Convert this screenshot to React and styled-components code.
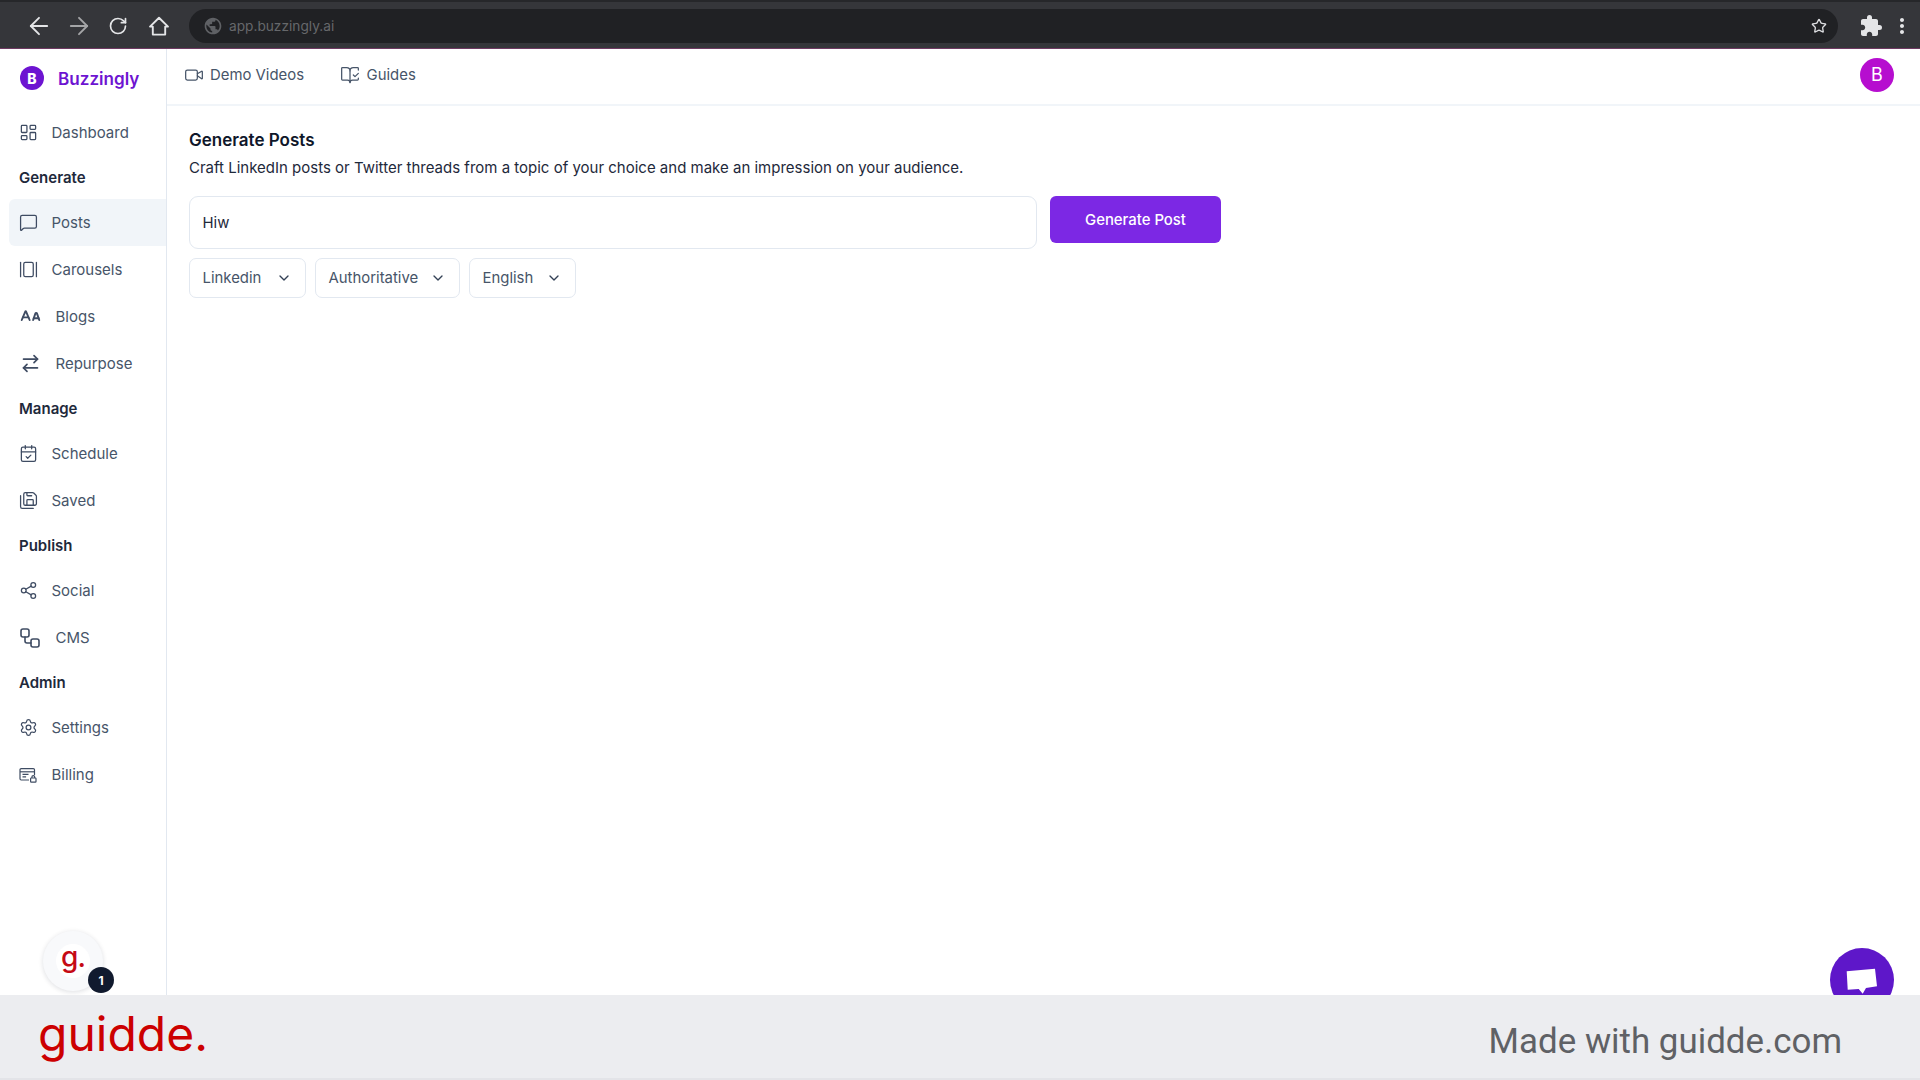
import React from 'react';
import styled, { createGlobalStyle } from 'styled-components';
import {
  ALargeSmall,
  ArrowLeft,
  ArrowRight,
  ArrowRightLeft,
  BookOpenCheck,
  CalendarCheck,
  ChevronDown,
  GalleryHorizontal,
  LayoutDashboard,
  MessageSquare,
  RotateCw,
  SaveAll,
  Settings,
  Share2,
  Star,
  Video,
  Workflow,
} from 'lucide-react';
import { MdExtension, MdMoreVert, MdPublic } from 'react-icons/md';

const BillingIcon = ({ size = 18 }) => (
  <svg width={size} height={size} viewBox="0 0 18 18" fill="none" stroke="currentColor" strokeWidth="1.2">
    <path d="M10 14H2.2A1.2 1.2 0 0 1 1 12.8V3.8a1.2 1.2 0 0 1 1.2-1.2h12.1a1.2 1.2 0 0 1 1.2 1.2V9" />
    <path d="M1 5.8h14.5" />
    <path d="M3.5 8.4h6M3.5 10.8h3.6" />
    <rect x="11.6" y="12" width="5.4" height="4.2" rx=".7" />
    <path d="M12.9 12v-1a1.4 1.4 0 0 1 2.8 0v1" />
  </svg>
);

const HomeIcon = () => (
  <svg width="24" height="24" viewBox="0 0 24 24" fill="none" stroke="currentColor" strokeWidth="1.9" strokeLinejoin="round">
    <path d="M12 3.8 21 12.6h-2.8v8H5.8v-8H3z" />
  </svg>
);

const NAV = [
  { type: 'item', label: 'Dashboard', icon: LayoutDashboard, size: 19 },
  { type: 'head', label: 'Generate' },
  { type: 'item', label: 'Posts', icon: MessageSquare, size: 19, active: true },
  { type: 'item', label: 'Carousels', icon: GalleryHorizontal, size: 19 },
  { type: 'item', label: 'Blogs', icon: ALargeSmall, size: 21, stroke: 2.2, wide: true },
  { type: 'item', label: 'Repurpose', icon: ArrowRightLeft, size: 21, stroke: 1.9, wide: true },
  { type: 'head', label: 'Manage' },
  { type: 'item', label: 'Schedule', icon: CalendarCheck, size: 19 },
  { type: 'item', label: 'Saved', icon: SaveAll, size: 19 },
  { type: 'head', label: 'Publish' },
  { type: 'item', label: 'Social', icon: Share2, size: 19 },
  { type: 'item', label: 'CMS', icon: Workflow, size: 24, wide: true },
  { type: 'head', label: 'Admin' },
  { type: 'item', label: 'Settings', icon: Settings, size: 19 },
  { type: 'item', label: 'Billing', icon: BillingIcon, size: 18 },
];

const App = () => (
  <Page>
    <GlobalStyle />
    <BrowserBar>
      <ChromeButton><ArrowLeft size={28} strokeWidth={1.6} /></ChromeButton>
      <ChromeButton $dim><ArrowRight size={28} strokeWidth={1.6} /></ChromeButton>
      <ChromeButton><ReloadIcon size={20} strokeWidth={2} /></ChromeButton>
      <ChromeButton><HomeIcon /></ChromeButton>
      <AddressBar>
        <MdPublic size={20} color="#5f6165" />
        <AddressText>app.buzzingly.ai</AddressText>
        <StarWrap><Star size={16} strokeWidth={2} /></StarWrap>
      </AddressBar>
      <ChromeRight>
        <ChromeButton><MdExtension size={24} /></ChromeButton>
        <ChromeButton><MdMoreVert size={24} /></ChromeButton>
      </ChromeRight>
    </BrowserBar>

    <AppBody>
      <Sidebar>
        <Brand>
          <BrandMark>B</BrandMark>
          <BrandName>Buzzingly</BrandName>
        </Brand>
        <nav>
          {NAV.map(entry =>
            entry.type === 'head' ? (
              <NavHeading key={entry.label}>{entry.label}</NavHeading>
            ) : (
              <NavItem key={entry.label} $active={entry.active}>
                <NavIcon $wide={entry.wide}>
                  <entry.icon size={entry.size} strokeWidth={entry.stroke || 1.6} />
                </NavIcon>
                {entry.label}
              </NavItem>
            ),
          )}
        </nav>
      </Sidebar>

      <Main>
        <TopBar>
          <TopLink>
            <Video size={20} strokeWidth={1.5} />
            Demo Videos
          </TopLink>
          <TopLink>
            <BookOpenCheck size={20} strokeWidth={1.5} />
            Guides
          </TopLink>
          <Avatar>B</Avatar>
        </TopBar>
        <Content>
          <Title>Generate Posts</Title>
          <Subtitle>
            Craft LinkedIn posts or Twitter threads from a topic of your choice and make an impression on your audience.
          </Subtitle>
          <InputRow>
            <TopicInput>Hiw</TopicInput>
            <GenerateButton>Generate Post</GenerateButton>
          </InputRow>
          <SelectRow>
            <Select $width={117}>Linkedin<ChevronDown size={16} strokeWidth={2} /></Select>
            <Select $width={145}>Authoritative<ChevronDown size={16} strokeWidth={2} /></Select>
            <Select $width={107}>English<ChevronDown size={16} strokeWidth={2} /></Select>
          </SelectRow>
        </Content>
      </Main>

      <GuiddeBubble>
        <GuiddeMark>g.</GuiddeMark>
        <GuiddeBadge>1</GuiddeBadge>
      </GuiddeBubble>

      <ChatBubble>
        <svg width="64" height="64" viewBox="0 0 64 64">
          <polygon fill="#fff" points="16.7,23.3 45,20.7 47,38.3 36,40 32.7,45.7 28.7,41 17.7,41.7" />
        </svg>
      </ChatBubble>
    </AppBody>

    <Footer>
      <GuiddeLogo>guidde.</GuiddeLogo>
      <MadeWith>Made with guidde.com</MadeWith>
    </Footer>
  </Page>
);

export default App;

const GlobalStyle = createGlobalStyle`
  html, body {
    margin: 0;
    padding: 0;
    background: #fff;
  }
  body {
    font-family: Inter, "Liberation Sans", sans-serif;
  }
`;

const Page = styled.div`
  display: flex;
  flex-direction: column;
  width: 1920px;
  height: 1080px;
  overflow: hidden;
`;

const BrowserBar = styled.header`
  display: flex;
  align-items: center;
  gap: 16px;
  flex: none;
  box-sizing: border-box;
  height: 49px;
  padding: 2px 6px 0 27px;
  background: #35363a;
  border-top: 2px solid #26272a;
  border-bottom: 1px solid #6f3a62;
`;

const ChromeButton = styled.div`
  display: flex;
  align-items: center;
  justify-content: center;
  flex: none;
  width: 24px;
  height: 24px;
  color: ${props => (props.$dim ? '#a4a5a7' : '#e4e5e7')};
  svg {
    flex: none;
  }
`;

const ReloadIcon = styled(RotateCw)`
  margin-left: -2px;
`;

const AddressBar = styled.div`
  display: flex;
  align-items: center;
  flex: 1;
  height: 34px;
  margin-left: 2px;
  padding: 0 12px 0 14px;
  border-radius: 17px;
  background: #202124;
`;

const AddressText = styled.span`
  margin-left: 6px;
  font-size: 13.7px;
  color: #66686b;
`;

const StarWrap = styled.span`
  display: flex;
  margin-left: auto;
  margin-right: -1px;
  color: #dcdde0;
`;

const ChromeRight = styled.div`
  display: flex;
  gap: 7px;
  margin-left: 5px;
`;

const AppBody = styled.div`
  position: relative;
  display: flex;
  flex: 1;
  min-height: 0;
  overflow: hidden;
`;

const Sidebar = styled.aside`
  flex: none;
  box-sizing: border-box;
  width: 167px;
  padding-left: 9px;
  border-right: 1px solid #e2e8f0;
`;

const Brand = styled.div`
  display: flex;
  align-items: center;
  gap: 14px;
  height: 60px;
  padding: 0 0 2px 11px;
  box-sizing: border-box;
`;

const BrandMark = styled.div`
  display: flex;
  align-items: center;
  justify-content: center;
  width: 24px;
  height: 24px;
  border-radius: 50%;
  background: #6d14d1;
  color: #fff;
  font-size: 14px;
  font-weight: 800;
`;

const BrandName = styled.div`
  font-size: 17.1px;
  font-weight: 600;
  color: #6d14d1;
`;

const NavHeading = styled.div`
  display: flex;
  align-items: center;
  height: 43px;
  padding-left: 10px;
  font-size: 15px;
  font-weight: 600;
  color: #1e293b;
`;

const NavItem = styled.div`
  display: flex;
  align-items: center;
  height: 47px;
  padding-left: 11px;
  border-radius: 6px 0 0 6px;
  background: ${props => (props.$active ? '#f1f5f9' : 'transparent')};
  font-size: 15px;
  color: #475569;
`;

const NavIcon = styled.span`
  display: flex;
  align-items: center;
  justify-content: center;
  flex: none;
  width: ${props => (props.$wide ? '20px' : '16px')};
  margin-right: 15.5px;
  color: #3f4c63;
  svg {
    flex: none;
  }
`;

const Main = styled.main`
  display: flex;
  flex: 1;
  flex-direction: column;
  min-width: 0;
`;

const TopBar = styled.div`
  display: flex;
  align-items: center;
  gap: 36px;
  flex: none;
  box-sizing: border-box;
  height: 57px;
  padding: 0 26px 4px 16.5px;
  border-bottom: 2px solid #f1f5f9;
`;

const TopLink = styled.div`
  display: flex;
  align-items: center;
  gap: 6.5px;
  font-size: 14.9px;
  color: #475569;
`;

const Avatar = styled.div`
  display: flex;
  align-items: center;
  justify-content: center;
  width: 34px;
  height: 34px;
  margin-left: auto;
  border-radius: 50%;
  background: #b60ecf;
  color: #fff;
  font-size: 18px;
`;

const Content = styled.div`
  padding: 22px 0 0 22px;
`;

const Title = styled.h1`
  margin: 0;
  font-size: 17px;
  line-height: 24px;
  font-weight: 600;
  color: #0f172a;
`;

const Subtitle = styled.p`
  margin: 4px 0 0;
  font-size: 15px;
  line-height: 24px;
  color: #1e293b;
`;

const InputRow = styled.div`
  display: flex;
  align-items: flex-start;
  gap: 13px;
  margin-top: 16px;
`;

const TopicInput = styled.div`
  display: flex;
  align-items: center;
  box-sizing: border-box;
  width: 848px;
  height: 53px;
  padding-left: 12.5px;
  border: 1px solid #e2e8f0;
  border-radius: 9px;
  font-size: 14.9px;
  color: #1e293b;
`;

const GenerateButton = styled.div`
  display: flex;
  align-items: center;
  justify-content: center;
  width: 171px;
  height: 47px;
  border-radius: 6px;
  background: #7c28e4;
  color: #fff;
  font-size: 14.9px;
  font-weight: 500;
`;

const SelectRow = styled.div`
  display: flex;
  gap: 9px;
  margin-top: 9px;
`;

const Select = styled.div`
  display: flex;
  align-items: center;
  justify-content: space-between;
  box-sizing: border-box;
  width: ${props => props.$width}px;
  height: 40px;
  padding: 0 13px 0 12.5px;
  border: 1px solid #e2e8f0;
  border-radius: 7px;
  font-size: 14.9px;
  color: #475569;
  svg {
    color: #334155;
  }
`;

const GuiddeBubble = styled.div`
  position: absolute;
  left: 43px;
  bottom: 4px;
  display: flex;
  align-items: center;
  justify-content: center;
  width: 60px;
  height: 60px;
  border-radius: 50%;
  background: #f8f9fb;
  box-shadow: 0 1px 5px rgba(15, 23, 42, 0.14);
`;

const GuiddeMark = styled.span`
  display: flex;
  align-items: center;
  justify-content: center;
  box-sizing: border-box;
  width: 34px;
  height: 34px;
  padding-bottom: 8px;
  border-radius: 50%;
  background: #fff;
  font-size: 28px;
  font-weight: 500;
  letter-spacing: -1px;
  color: #c50a14;
`;

const GuiddeBadge = styled.span`
  position: absolute;
  right: -11px;
  bottom: -2px;
  display: flex;
  align-items: center;
  justify-content: center;
  width: 26px;
  height: 26px;
  border-radius: 50%;
  background: #111a2e;
  color: #fff;
  font-size: 12px;
  font-weight: 700;
`;

const ChatBubble = styled.div`
  position: absolute;
  right: 26px;
  bottom: -17px;
  width: 64px;
  height: 64px;
  border-radius: 50%;
  background: #5e17c9;
`;

const Footer = styled.footer`
  display: flex;
  align-items: center;
  justify-content: space-between;
  flex: none;
  box-sizing: border-box;
  height: 85px;
  padding: 0 78px 0 38px;
  background: #ecedf0;
  border-bottom: 2px solid #e3e4e8;
`;

const GuiddeLogo = styled.div`
  margin-top: -6px;
  font-size: 48px;
  color: #cc0000;
`;

const MadeWith = styled.div`
  margin-top: 9px;
  font-family: Roboto, sans-serif;
  font-size: 34.9px;
  color: #5f6165;
`;
